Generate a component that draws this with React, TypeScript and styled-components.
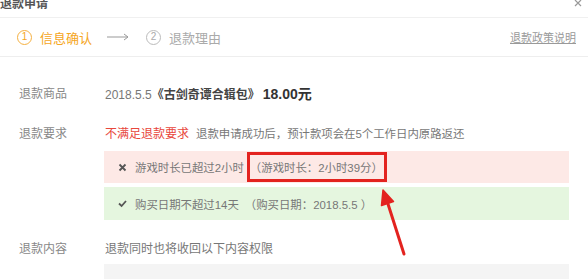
import React from "react";
import styled, { createGlobalStyle } from "styled-components";

const Global = createGlobalStyle`
  html, body { margin: 0; padding: 0; background: #fff; }
  body { font-family: "Liberation Sans", "Noto Sans CJK SC", sans-serif; overflow: hidden; }
  * { box-sizing: border-box; }
`;

const Dialog = styled.div`
  position: relative;
  width: 588px;
  height: 279px;
  overflow: hidden;
  background: #fff;
`;

const Header = styled.div`
  display: flex;
  justify-content: space-between;
  align-items: flex-start;
  height: 21px;
  margin-top: -3px;
  padding: 0 6px 0 0;
  border-bottom: 1px solid #f0f0f0;
`;

const Title = styled.div`
  font-size: 12px;
  line-height: 15px;
  font-weight: bold;
  color: #555;
`;

const Close = styled.svg`
  width: 8px;
  height: 8px;
  margin-top: 2px;
`;

const Steps = styled.div`
  display: flex;
  align-items: center;
  height: 39px;
  padding: 0 12px 0 17px;
  border-bottom: 1px solid #eee;
`;

const Step = styled.div<{ $active?: boolean }>`
  display: flex;
  align-items: center;
  gap: 8px;
  font-size: 13px;
  color: ${(p) => (p.$active ? "#f5a623" : "#aaa")};
`;

const Circle = styled.span<{ $active?: boolean }>`
  display: inline-flex;
  align-items: center;
  justify-content: center;
  width: 15px;
  height: 15px;
  border-radius: 50%;
  border: 1px solid ${(p) => (p.$active ? "#f5b040" : "#bbb")};
  font-size: 10px;
  line-height: 1;
`;

const StepArrow = styled.svg`
  width: 22px;
  height: 8px;
  margin: 0 17px 0 15px;
`;

const PolicyLink = styled.a`
  margin-left: auto;
  font-size: 11px;
  color: #999;
  text-decoration: underline;
`;

const Body = styled.div`
  display: grid;
  grid-template-columns: 85px 465px;
  padding: 27px 0 0 19px;
  row-gap: 19px;
`;

const Label = styled.div`
  font-size: 12px;
  line-height: 20px;
  color: #888;
`;

const Value = styled.div`
  display: flex;
  flex-direction: column;
  font-size: 12px;
  color: #777;
`;

const Line = styled.div`
  display: flex;
  align-items: baseline;
  line-height: 20px;
  padding-left: 1px;
`;

const Bold = styled.span`
  font-weight: bold;
  color: #444;
`;

const Price = styled.span`
  font-weight: bold;
  color: #333;
  font-size: 14px;
  margin-left: 3px;
`;

const Red = styled.span`
  color: #e8473c;
  margin-right: 7px;
`;

const Muted = styled.span`
  font-size: 11.4px;
`;

const Check = styled.div<{ $ok?: boolean }>`
  display: flex;
  align-items: center;
  height: ${(p) => (p.$ok ? "33px" : "32px")};
  margin-top: ${(p) => (p.$ok ? "4px" : "7px")};
  padding-left: 14px;
  background: ${(p) => (p.$ok ? "#e5f6df" : "#fde9e6")};
  color: #777;
  font-size: 11.4px;
`;

const Icon = styled.svg`
  width: 9px;
  height: 9px;
  margin-right: 8px;
  flex: none;
`;

const Note = styled.span<{ $gap?: number }>`
  margin-left: ${(p) => p.$gap ?? 4}px;
`;

const Highlight = styled.span`
  display: inline-flex;
  align-items: center;
  height: 30px;
  margin-left: 3px;
  padding: 0 1px 0 0;
  border: 3px solid #e3231f;
`;

const Content = styled.div`
  display: flex;
  flex-direction: column;
  font-size: 12px;
  color: #777;
`;

const Placeholder = styled.div`
  margin-top: 5px;
  height: 40px;
  background: #f4f4f4;
`;

const Annotation = styled.svg`
  position: absolute;
  left: 370px;
  top: 180px;
  width: 40px;
  height: 80px;
`;

export default function App() {
  return (
    <>
      <Global />
      <Dialog>
        <Header>
          <Title>退款申请</Title>
          <Close viewBox="0 0 8 8">
            <path d="M1 1L7 7M7 1L1 7" stroke="#999" strokeWidth="1.2" />
          </Close>
        </Header>
        <Steps>
          <Step $active>
            <Circle $active>1</Circle>信息确认
          </Step>
          <StepArrow viewBox="0 0 22 8">
            <path d="M0 4H21M17 1L21 4L17 7" stroke="#999" strokeWidth="1" fill="none" />
          </StepArrow>
          <Step>
            <Circle>2</Circle>退款理由
          </Step>
          <PolicyLink>退款政策说明</PolicyLink>
        </Steps>
        <Body>
          <Label>退款商品</Label>
          <Value>
            <Line>
              2018.5.5<Bold>《古剑奇谭合辑包》</Bold>
              <Price>18.00元</Price>
            </Line>
          </Value>
          <Label>退款要求</Label>
          <Value>
            <Line>
              <Red>不满足退款要求</Red>
              <Muted>退款申请成功后，预计款项会在5个工作日内原路返还</Muted>
            </Line>
            <Check>
              <Icon viewBox="0 0 9 9">
                <path d="M1.5 1.5L7.5 7.5M7.5 1.5L1.5 7.5" stroke="#555" strokeWidth="1.8" />
              </Icon>
              游戏时长已超过2小时
              <Highlight>（游戏时长：2小时39分）</Highlight>
            </Check>
            <Check $ok>
              <Icon viewBox="0 0 9 9">
                <path d="M1 4.5L3.6 7L8 2" stroke="#555" strokeWidth="1.8" fill="none" />
              </Icon>
              购买日期不超过14天
              <Note $gap={6}>（购买日期：2018.5.5 ）</Note>
            </Check>
          </Value>
          <Label>退款内容</Label>
          <Content>
            <Line>退款同时也将收回以下内容权限</Line>
            <Placeholder />
          </Content>
        </Body>
        <Annotation viewBox="0 0 40 80">
          <path d="M18 24L34 74" stroke="#e3231f" strokeWidth="3" strokeLinecap="round" />
          <path d="M13 10L23.5 21.5L11.5 25.5Z" fill="#e3231f" stroke="#e3231f" strokeWidth="1.5" strokeLinejoin="round" />
        </Annotation>
      </Dialog>
    </>
  );
}
